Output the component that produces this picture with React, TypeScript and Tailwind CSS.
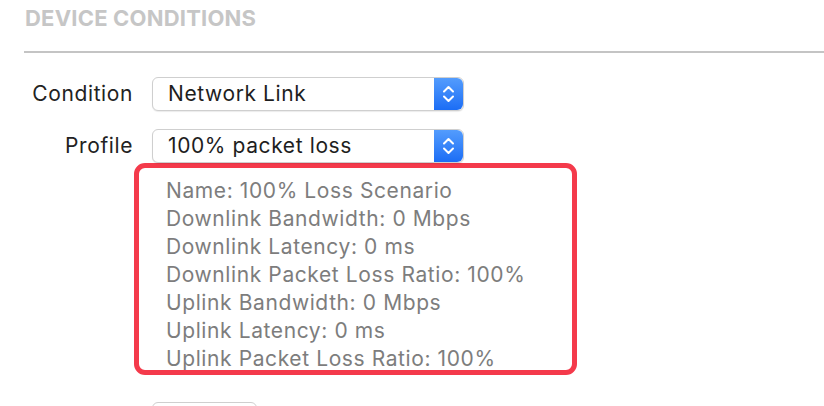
import React from 'react'

const lines = [
  'Name: 100% Loss Scenario',
  'Downlink Bandwidth: 0 Mbps',
  'Downlink Latency: 0 ms',
  'Downlink Packet Loss Ratio: 100%',
  'Uplink Bandwidth: 0 Mbps',
  'Uplink Latency: 0 ms',
  'Uplink Packet Loss Ratio: 100%',
]

function Stepper() {
  return (
    <div className="flex w-[29px] items-center justify-center rounded-r-[6px] bg-gradient-to-b from-[#539cfd] to-[#1b6df5]">
      <svg width="13" height="20" viewBox="0 0 13 20" fill="none">
        <path d="M2 7.5 L6.5 3 L11 7.5" stroke="white" strokeWidth="2" strokeLinecap="round" strokeLinejoin="round" />
        <path d="M2 12.5 L6.5 17 L11 12.5" stroke="white" strokeWidth="2" strokeLinecap="round" strokeLinejoin="round" />
      </svg>
    </div>
  )
}

function Popup({ value }: { value: string }) {
  return (
    <div className="flex h-[34px] w-[312px] rounded-[6px] border border-[#cfcfcf] bg-white shadow-[0_1px_1px_rgba(0,0,0,0.08)]">
      <div className="flex flex-1 items-center pl-[15px] text-[21px] tracking-[0.6px] text-[#1e1e1e]">{value}</div>
      <Stepper />
    </div>
  )
}

export default function App() {
  return (
    <div
      className="h-[406px] w-[824px] overflow-hidden bg-white"
      style={{ fontFamily: 'Inter, "Noto Sans", sans-serif' }}
    >
      <div className="pl-[25px] pt-[5px] text-[22px] font-bold leading-[26px] tracking-[0.2px] text-[#c6c6c6]">
        DEVICE CONDITIONS
      </div>
      <div className="ml-[24px] mt-[20px] h-[2px] bg-[#c4c4c4]" />

      <div className="mt-[24px] grid grid-cols-[133px_auto] items-center gap-x-[19px] gap-y-[18px]">
        <div className="text-right text-[21px] tracking-[0.6px] text-[#222]">Condition</div>
        <Popup value="Network Link" />
        <div className="text-right text-[21px] tracking-[0.6px] text-[#222]">Profile</div>
        <Popup value="100% packet loss" />
      </div>

      <div className="ml-[134px] h-[212px] w-[443px] overflow-hidden rounded-[11px] border-[5px] border-[#f43a4b] pl-[27px] pt-[9px]">
        {lines.map((l) => (
          <div key={l} className="text-[21px] leading-[28px] tracking-[0.6px] text-[#7d7d7d]">
            {l}
          </div>
        ))}
      </div>

      <div className="ml-[152px] mt-[27px] h-[30px] w-[105px] rounded-[6px] border border-[#cfcfcf] bg-white" />
    </div>
  )
}
